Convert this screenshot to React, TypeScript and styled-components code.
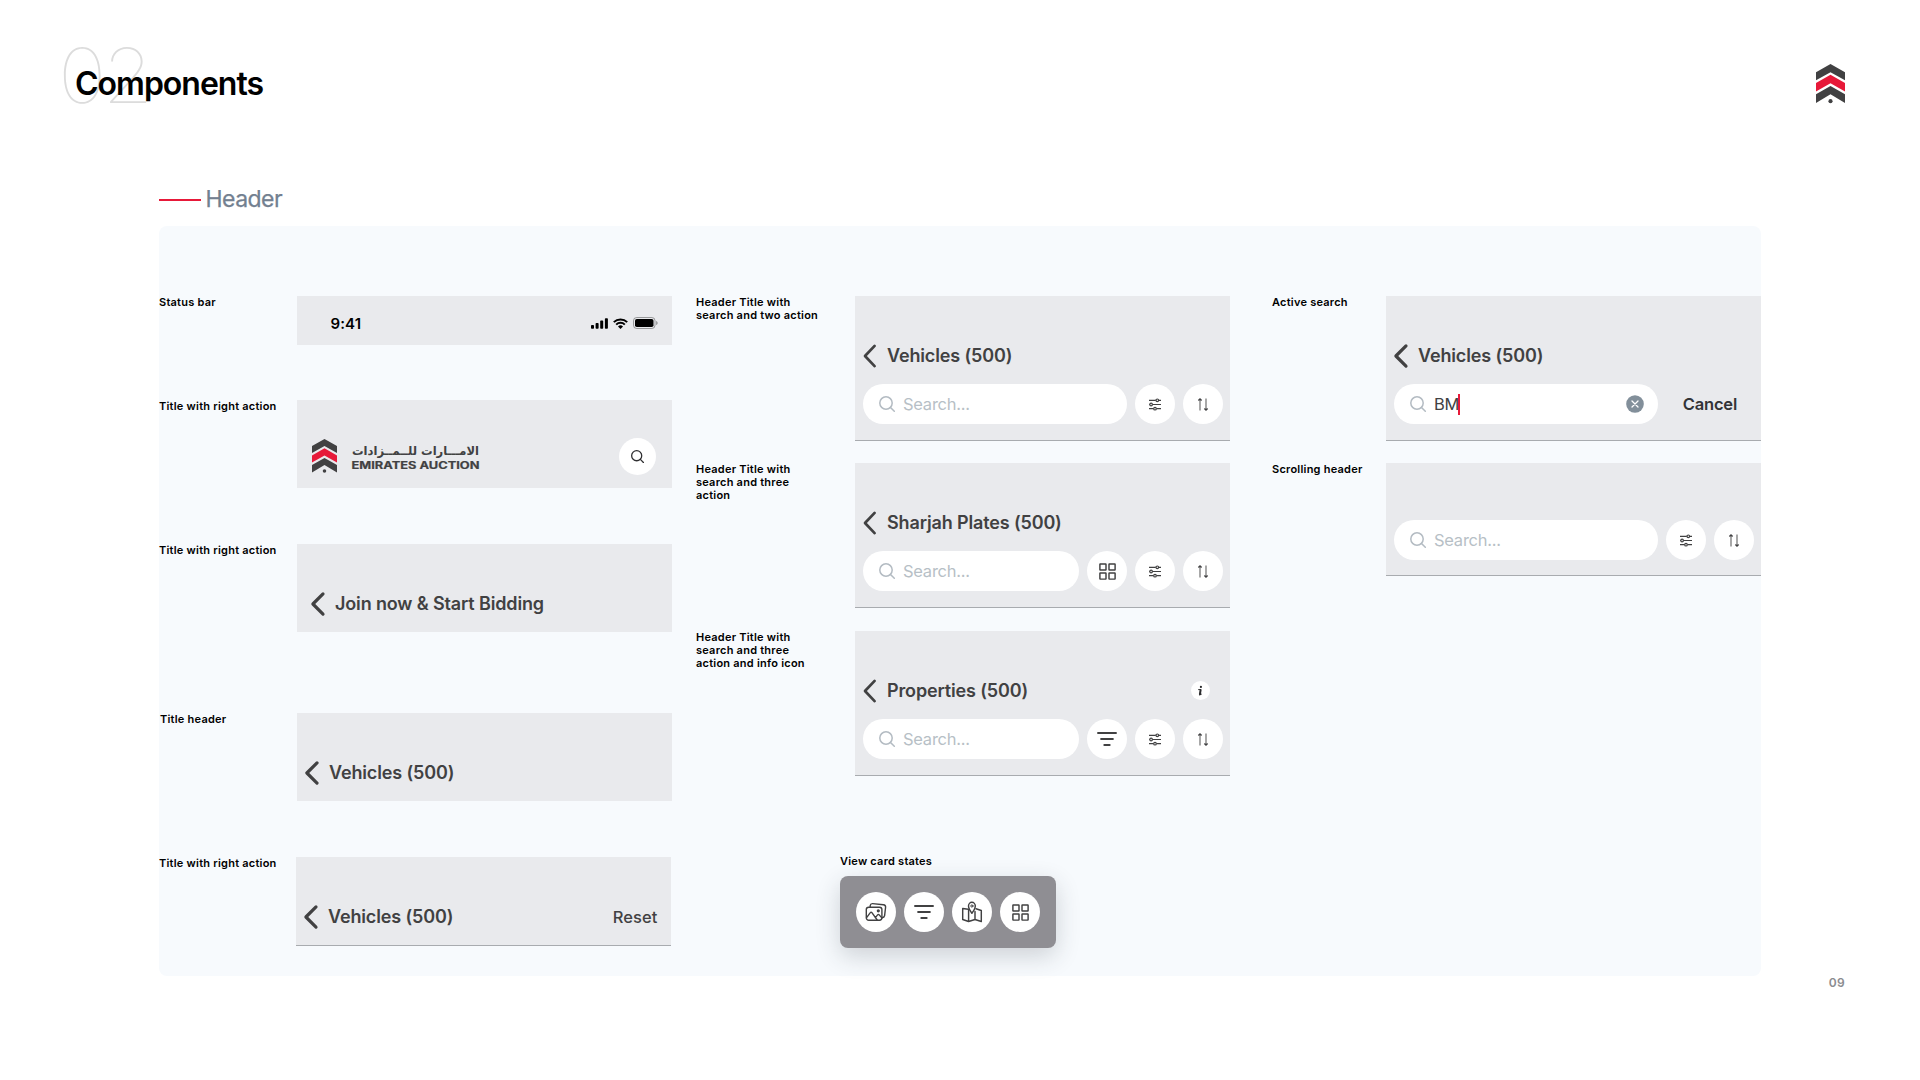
import React from "react";
import styled, { createGlobalStyle, css } from "styled-components";

const ink = "#414142";
const red = "#e71939";

const GlobalStyle = createGlobalStyle`
  * { box-sizing: border-box; }
  body { margin: 0; background: #ffffff; }
  svg { display: block; flex: none; overflow: visible; }
`;

const Page = styled.div`
  width: 1920px;
  height: 1080px;
  padding: 42px 75px 0;
  overflow: hidden;
  background: #ffffff;
  color: #000000;
  font-family: Inter, "Liberation Sans", sans-serif;
`;

const TopBar = styled.header`
  display: flex;
  justify-content: space-between;
  align-items: flex-start;
  height: 142px;
`;

const Heading = styled.div`
  position: relative;
  padding-top: 22px;
`;

const Chapter = styled.span`
  position: absolute;
  left: -17.5px;
  top: -13px;
  font-size: 76px;
  line-height: 92px;
  font-weight: 100;
  font-optical-sizing: none;
  font-variation-settings: "opsz" 14;
  letter-spacing: -3.6px;
  transform: scaleX(1.08);
  transform-origin: left center;
  color: #dcdcdc;
`;

const PageTitle = styled.h1`
  position: relative;
  margin: 0;
  font-size: 32px;
  line-height: 40px;
  font-weight: 600;
  letter-spacing: -1px;
`;

const BrandSlot = styled.div`
  padding: 22px 0 0;
`;

const SectionTitle = styled.h2`
  display: flex;
  align-items: center;
  gap: 4.5px;
  margin: 0 0 12px 84px;
  height: 30px;
  font-size: 23px;
  line-height: 30px;
  font-weight: 400;
  letter-spacing: -0.55px;
  color: #728090;
  -webkit-text-stroke: 0.25px #728090;
`;

const Rule = styled.span`
  width: 42px;
  height: 2px;
  margin-top: 2px;
  background: ${red};
`;

const Board = styled.main`
  display: flex;
  width: 1602px;
  height: 750px;
  margin-left: 84px;
  padding-top: 70px;
  border-radius: 8px;
  background: #f7fafd;
`;

const Column = styled.section<{ $width: number }>`
  display: flex;
  flex-direction: column;
  flex: none;
  width: ${(p) => p.$width}px;
`;

const Specimen = styled.div<{ $gap?: number }>`
  display: flex;
  align-items: flex-start;
  margin-top: ${(p) => p.$gap ?? 0}px;
`;

const Label = styled.div<{ $width: number; $indent?: number }>`
  flex: none;
  width: ${(p) => p.$width}px;
  padding-left: ${(p) => p.$indent ?? 0}px;
  font-size: 11px;
  line-height: 13px;
  font-weight: 600;
  letter-spacing: 0.23px;
  white-space: pre-line;
`;

const Screen = styled.div<{ $height: number; $line?: boolean; $pad?: number }>`
  display: flex;
  flex-direction: column;
  flex: none;
  width: 375px;
  height: ${(p) => p.$height}px;
  padding: ${(p) => p.$pad ?? 48}px 7px 0 8px;
  background: #e9eaed;
  ${(p) =>
    p.$line &&
    css`
      border-bottom: 1px solid #a8abaf;
    `}
`;

const StatusRow = styled.div`
  display: flex;
  align-items: center;
  justify-content: space-between;
  height: 18px;
  padding: 0 7px 0 25.5px;
`;

const Clock = styled.span`
  margin-top: 2px;
  font-size: 15px;
  line-height: 18px;
  font-weight: 600;
  letter-spacing: 0.1px;
`;

const StatusIcons = styled.div`
  display: flex;
  align-items: center;
  gap: 5px;
`;

const TitleRow = styled.div<{ $inset?: number }>`
  display: flex;
  align-items: center;
  height: 24px;
  padding-left: ${(p) => p.$inset ?? 0}px;
`;

const Title = styled.h3`
  margin: 0 auto 0 10px;
  font-size: 18px;
  line-height: 24px;
  font-weight: 640;
  letter-spacing: -0.14px;
  color: ${ink};
`;

const TextAction = styled.button<{ $strong?: boolean }>`
  padding: 0;
  border: 0;
  background: none;
  font: ${(p) => (p.$strong ? 600 : 500)} 16.5px/24px Inter, "Liberation Sans", sans-serif;
  letter-spacing: ${(p) => (p.$strong ? -0.2 : 0.08)}px;
  color: ${(p) => (p.$strong ? "#333437" : ink)};
  margin: ${(p) => (p.$strong ? "0 17px 0 auto" : "0 6.5px 0 0")};
`;

const BrandRow = styled.div`
  display: flex;
  align-items: center;
  height: 37px;
  padding: 0 9px 0 7px;
`;

const Round = styled.button<{ $size?: number }>`
  display: flex;
  align-items: center;
  justify-content: center;
  flex: none;
  width: ${(p) => p.$size ?? 40}px;
  height: ${(p) => p.$size ?? 40}px;
  padding: 0;
  border: 0;
  border-radius: 50%;
  background: #ffffff;
  color: ${ink};
`;

const WordmarkSlot = styled.div`
  margin: 0 auto 0 14px;
`;

const InfoSlot = styled.div`
  margin: -1px 13px 0 0;
`;

const SearchRow = styled.div<{ $gap?: number }>`
  display: flex;
  align-items: center;
  gap: 8px;
  margin-top: ${(p) => p.$gap ?? 16}px;
`;

const Field = styled.div<{ $narrow?: boolean }>`
  display: flex;
  align-items: center;
  flex: none;
  width: ${(p) => (p.$narrow ? 216 : 264)}px;
  height: 40px;
  padding: 0 14px 0 16px;
  border-radius: 20px;
  background: #ffffff;
`;

const Placeholder = styled.span`
  margin-left: 8px;
  font-size: 16.5px;
  line-height: 24px;
  letter-spacing: -0.25px;
  color: #b7bfc6;
`;

const Typed = styled.span`
  display: flex;
  align-items: center;
  margin: 0 auto 0 8px;
  font-size: 16.5px;
  line-height: 24px;
  letter-spacing: -0.3px;
  color: ${ink};
`;

const Caret = styled.span`
  width: 2px;
  height: 21px;
  margin-left: -1px;
  background: ${red};
`;

const CardStates = styled.div`
  margin: 79px 0 0 144px;
`;

const StateCard = styled.div`
  display: flex;
  gap: 8px;
  width: 216px;
  height: 72px;
  margin-top: 8px;
  padding: 16px;
  border-radius: 8px;
  background: #8f8e93;
  box-shadow: 0 8px 24px rgba(40, 50, 60, 0.2);
`;

const PageNumber = styled.div`
  display: flex;
  justify-content: flex-end;
  font-size: 12px;
  line-height: 14px;
  font-weight: 600;
  letter-spacing: 0.3px;
  color: #8b8c90;
`;

const Emblem = ({ width }: { width: number }) => (
  <svg width={width} height={(width * 39.2) / 28.8} viewBox="0 0 28.8 39.2">
    <path fill={ink} d="M14.4 0 28.8 8.1v8.1L14.4 8.1 0 16.2V8.1z" />
    <path fill={red} d="M14.4 10.8 28.8 18.9v8.3L14.4 19 0 27.2v-8.3z" />
    <path fill={ink} d="M14.4 21.8 28.8 30v8.7L14.4 30 0 38.7V30z" />
    <circle fill={ink} cx="14.4" cy="36.9" r="2.05" />
  </svg>
);

const Wordmark = () => (
  <svg width="129" height="26" viewBox="0 0 129 26" fill={ink}>
    <text x="128" y="11.2" direction="rtl" textLength="127" lengthAdjust="spacingAndGlyphs" fontFamily="DejaVu Sans, sans-serif" fontWeight="700" fontSize="12">
      الامـــارات للــمــزادات
    </text>
    <text x="0.5" y="25" textLength="128" lengthAdjust="spacingAndGlyphs" fontFamily="Inter, sans-serif" fontWeight="700" fontSize="9.8" stroke={ink} strokeWidth=".2">
      EMIRATES AUCTION
    </text>
  </svg>
);

const Back = ({ thin }: { thin?: boolean }) => (
  <svg width="14" height="24" viewBox="0 0 14 24" fill="none" stroke={ink} strokeWidth={thin ? 2.7 : 3.2} strokeLinecap="round" strokeLinejoin="round">
    <path d={thin ? "M11.6 1.9 2 12l9.6 10.1" : "M12 1.9 1.9 12 12 22.1"} />
  </svg>
);

const Magnifier = ({ size, color, weight }: { size: number; color: string; weight: number }) => (
  <svg width={size} height={size} viewBox="0 0 16 16" fill="none" stroke={color} strokeWidth={weight} strokeLinecap="round">
    <circle cx="7" cy="7" r="6.2" />
    <path d="m11.5 11.5 3.8 3.8" />
  </svg>
);

const Sliders = () => (
  <svg width="12" height="13" viewBox="0 0 12 13" fill="none" stroke={ink} strokeWidth="1.2">
    <path d="M0 2.3h6.8M9.8 2.3H12M0 6.5h.6M3.6 6.5H12M0 10.7h4.5M7.5 10.7H12" />
    <circle cx="8.3" cy="2.3" r="1.3" />
    <circle cx="2.1" cy="6.5" r="1.3" />
    <circle cx="6" cy="10.7" r="1.3" />
  </svg>
);

const Sort = () => (
  <svg width="12" height="13" viewBox="0 0 12 13" fill="none" stroke={ink}>
    <path strokeWidth="1.3" d="M3 1.2v11.3M9 .5v11.3" opacity=".7" />
    <path strokeWidth="1.5" d="M1.4 2.5 3 1l1.6 1.5M7.4 10.5 9 12l1.6-1.5" />
  </svg>
);

const Grid = () => (
  <svg width="17" height="17" viewBox="0 0 17 17" fill="none" stroke={ink} strokeWidth="1.45">
    <rect x=".9" y=".9" width="6.1" height="6.1" rx=".3" />
    <rect x="10" y=".9" width="6.1" height="6.1" rx=".3" />
    <rect x=".9" y="10" width="6.1" height="6.1" rx=".3" />
    <rect x="10" y="10" width="6.1" height="6.1" rx=".3" />
  </svg>
);

const Filter = () => (
  <svg width="20" height="14" viewBox="0 0 20 14" fill="none" stroke={ink} strokeWidth="2.2" strokeLinecap="round">
    <path d="M1.1 1h17.8M4.2 7h11.6M7.4 13h5.2" />
  </svg>
);

const Gallery = () => (
  <svg width="22" height="20" viewBox="0 0 22 20" fill="none" stroke={ink} strokeWidth="1.4" strokeLinejoin="round" strokeLinecap="round">
    <rect x="1.3" y="5.2" width="15.6" height="13" rx="2.4" />
    <path d="M5.2 5V3.6c.2-1.4 1-2.1 2.4-2L18.4 2.7c1.5.2 2.3 1.1 2.2 2.5L19.6 13.6c-.2 1.2-1.2 2-2.7 2.2" />
    <path d="m1.6 15.6 3.7-4.9c.5-.7 1.1-.7 1.6 0l5.3 7.3M10.4 15.6l2.2-2.7c.5-.6 1.1-.6 1.6 0l2.6 3" />
    <circle cx="13.3" cy="8.8" r=".9" fill={ink} />
  </svg>
);

const MapPin = () => (
  <svg width="20" height="22" viewBox="0 0 20 22" fill="none" stroke={ink} strokeWidth="1.45" strokeLinejoin="round" strokeLinecap="round">
    <path d="M6.3 8.3.7 7.5v11l5.9 2 6.4-2 6.3 2v-11l-5.3-1.7M6.6 8.5v12M13 10.5v8" />
    <path d="M9.9 12.3C7.7 9.3 6.5 7 6.5 5a3.4 3.7 0 0 1 6.8 0c0 2-1.2 4.3-3.4 7.3z" />
    <circle cx="9.9" cy="5" r="1.1" strokeWidth="1" />
  </svg>
);

const Info = () => (
  <svg width="19" height="19" viewBox="0 0 19 19">
    <circle cx="9.5" cy="9.5" r="9.5" fill="#fff" />
    <g fill="none" stroke="#2b2b2d" strokeLinecap="round" strokeLinejoin="round">
      <path strokeWidth="2.2" d="M9.9 5.9v.05" />
      <path strokeWidth="2" d="M9.6 9 8.9 13.2" />
      <path strokeWidth="1" d="M7.6 8.6h2M8.7 13.9l1.7-.7" />
    </g>
  </svg>
);

const Clear = () => (
  <svg width="18" height="18" viewBox="0 0 18 18">
    <circle cx="9" cy="9" r="8.8" fill="#828f9a" />
    <path d="m6 6 6 6M12 6l-6 6" stroke="#fff" strokeWidth="1.3" strokeLinecap="round" />
  </svg>
);

const Signal = () => (
  <svg width="17" height="11" viewBox="0 0 17 11">
    <rect x="0" y="6.9" width="3" height="3.8" rx=".8" />
    <rect x="4.6" y="4.9" width="3" height="5.8" rx=".8" />
    <rect x="9.2" y="2.6" width="3" height="8.1" rx=".8" />
    <rect x="13.9" y=".3" width="3" height="10.4" rx=".8" />
  </svg>
);

const Wifi = () => (
  <svg width="15" height="11" viewBox="0 0 15 11" fill="none" stroke="#000" strokeWidth="2">
    <path d="M.8 4.1a9.6 9.6 0 0 1 13.4 0M3.2 6.6a6.1 6.1 0 0 1 8.6 0" />
    <path stroke="none" fill="#000" d="M5 8.4a3.6 3.6 0 0 1 5 0L7.5 11z" />
  </svg>
);

const Battery = () => (
  <svg width="25" height="12" viewBox="0 0 25 12">
    <rect x=".5" y=".5" width="21.5" height="11" rx="3.2" fill="none" stroke="#000" opacity=".35" />
    <rect x="2" y="2" width="18.5" height="8" rx="1.8" />
    <path d="M23.2 4v4c.8-.3 1.4-1.1 1.4-2s-.6-1.7-1.4-2z" opacity=".4" />
  </svg>
);

const TitleLine = ({ text, inset, thin, children }: { text: string; inset?: number; thin?: boolean; children?: React.ReactNode }) => (
  <TitleRow $inset={inset}>
    <Back thin={thin} />
    <Title>{text}</Title>
    {children}
  </TitleRow>
);

const Search = ({ extra, gap }: { extra?: React.ReactNode; gap?: number }) => (
  <SearchRow $gap={gap}>
    <Field $narrow={Boolean(extra)}>
      <Magnifier size={16} color="#b3bbc2" weight={1.5} />
      <Placeholder>Search...</Placeholder>
    </Field>
    {extra && <Round>{extra}</Round>}
    <Round><Sliders /></Round>
    <Round><Sort /></Round>
  </SearchRow>
);

export default function App() {
  return (
    <Page>
      <GlobalStyle />
      <TopBar>
        <Heading>
          <Chapter>02</Chapter>
          <PageTitle>Components</PageTitle>
        </Heading>
        <BrandSlot><Emblem width={29} /></BrandSlot>
      </TopBar>
      <SectionTitle><Rule />Header</SectionTitle>
      <Board>
        <Column $width={537}>
          <Specimen>
            <Label $width={138}>Status bar</Label>
            <Screen $height={49} $pad={18}>
              <StatusRow>
                <Clock>9:41</Clock>
                <StatusIcons><Signal /><Wifi /><Battery /></StatusIcons>
              </StatusRow>
            </Screen>
          </Specimen>
          <Specimen $gap={55}>
            <Label $width={138}>Title with right action</Label>
            <Screen $height={88} $pad={38}>
              <BrandRow>
                <Emblem width={25} />
                <WordmarkSlot><Wordmark /></WordmarkSlot>
                <Round $size={37}><Magnifier size={13} color="#2f2f31" weight={1.6} /></Round>
              </BrandRow>
            </Screen>
          </Specimen>
          <Specimen $gap={56}>
            <Label $width={138}>Title with right action</Label>
            <Screen $height={88}><TitleLine text="Join now &amp; Start Bidding" inset={6} /></Screen>
          </Specimen>
          <Specimen $gap={81}>
            <Label $width={138} $indent={1}>Title header</Label>
            <Screen $height={88}><TitleLine text="Vehicles (500)" /></Screen>
          </Specimen>
          <Specimen $gap={56}>
            <Label $width={137}>Title with right action</Label>
            <Screen $height={89} $line>
              <TitleLine text="Vehicles (500)"><TextAction>Reset</TextAction></TitleLine>
            </Screen>
          </Specimen>
        </Column>

        <Column $width={576}>
          <Specimen>
            <Label $width={159}>{"Header Title with\nsearch and two action"}</Label>
            <Screen $height={145} $line>
              <TitleLine thin text="Vehicles (500)" />
              <Search />
            </Screen>
          </Specimen>
          <Specimen $gap={22}>
            <Label $width={159}>{"Header Title with\nsearch and three\naction"}</Label>
            <Screen $height={145} $line>
              <TitleLine thin text="Sharjah Plates (500)" />
              <Search extra={<Grid />} />
            </Screen>
          </Specimen>
          <Specimen $gap={23}>
            <Label $width={159}>{"Header Title with\nsearch and three\naction and info icon"}</Label>
            <Screen $height={145} $line>
              <TitleLine thin text="Properties (500)"><InfoSlot><Info /></InfoSlot></TitleLine>
              <Search extra={<Filter />} />
            </Screen>
          </Specimen>
          <CardStates>
            <Label $width={216}>View card states</Label>
            <StateCard>
              <Round><Gallery /></Round>
              <Round><Filter /></Round>
              <Round><MapPin /></Round>
              <Round><Grid /></Round>
            </StateCard>
          </CardStates>
        </Column>

        <Column $width={489}>
          <Specimen>
            <Label $width={114}>Active search</Label>
            <Screen $height={145} $line>
              <TitleLine text="Vehicles (500)" />
              <SearchRow>
                <Field>
                  <Magnifier size={16} color="#b3bbc2" weight={1.5} />
                  <Typed>BM<Caret /></Typed>
                  <Clear />
                </Field>
                <TextAction $strong>Cancel</TextAction>
              </SearchRow>
            </Screen>
          </Specimen>
          <Specimen $gap={22}>
            <Label $width={114}>Scrolling header</Label>
            <Screen $height={113} $pad={57} $line>
              <Search gap={0} />
            </Screen>
          </Specimen>
        </Column>
      </Board>
      <PageNumber>09</PageNumber>
    </Page>
  );
}
